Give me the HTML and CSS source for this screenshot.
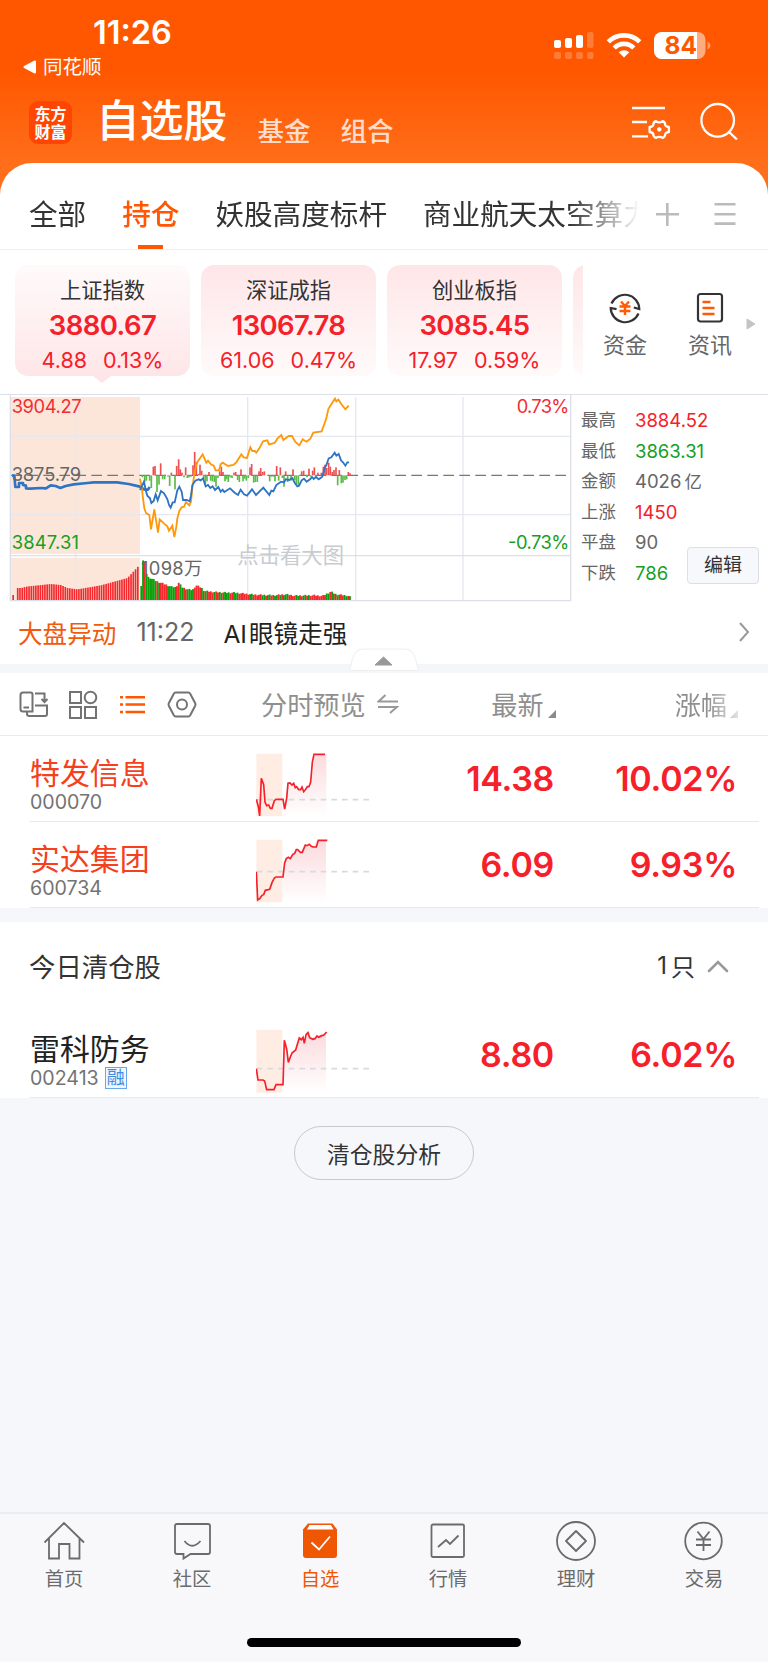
FILE: index.html
```html
<!DOCTYPE html>
<html lang="zh-CN">
<head>
<meta charset="utf-8">
<title>自选股</title>
<link rel="stylesheet" href="styles.css">
</head>
<body>
<div class="phone">
  <header class="top">
    <div class="status">
      <div class="status-left">
        <div class="time">11:26</div>
        <div class="back"><svg width="14" height="14" viewBox="0 0 14 14"><path d="M1.5 7 12 1.5v11z" fill="#fff" stroke="#fff" stroke-width="2" stroke-linejoin="round"/></svg><span>同花顺</span></div>
      </div>
      <svg class="status-icons" width="160" height="32" viewBox="550 30 160 32">
        <g fill="#fff"><rect x="553" y="40" width="7" height="8" rx="2"/><rect x="564" y="38" width="7" height="10" rx="2"/><rect x="575" y="35" width="7" height="13" rx="2"/></g>
        <g fill="#fff" opacity=".22"><rect x="586" y="32" width="6.5" height="16" rx="2"/><rect x="553" y="52" width="7" height="7" rx="2"/><rect x="564" y="52" width="7" height="7" rx="2"/><rect x="575" y="52" width="7" height="7" rx="2"/><rect x="586" y="52" width="6.500" height="7" rx="2"/></g>
        <g fill="none" stroke="#fff" stroke-width="4.600"><path d="M607.300 41.800a22.300 22.300 0 0 1 31.400 0"/><path d="M613.200 48a13.800 13.800 0 0 1 19.600 0"/></g>
        <path d="M623 57.500l-5.300-5.200a7.600 7.600 0 0 1 10.600 0z" fill="#fff"/>
        <rect x="653" y="32" width="51.500" height="27" rx="8" fill="#ffab80"/>
        <path d="M661 32h35v27h-35a8 8 0 0 1-8-8V40a8 8 0 0 1 8-8z" fill="#fff"/>
        <path d="M706.500 41.500q3 1.500 3 4t-3 4z" fill="#ff9a66"/>
        <text x="663.500" y="54" class="battery-text">84</text>
      </svg>
    </div>
    <div class="titlebar">
      <div class="logo"><span>东方</span><span>财富</span></div>
      <h1>自选股</h1>
      <span class="sub-title">基金</span>
      <span class="sub-title second">组合</span>
      <svg class="title-icons" width="112" height="40" viewBox="628 100 112 40" fill="none" stroke="#fff" stroke-width="2.300">
        <path d="M631 108h33M631 122h15M631 136.300h16"/>
        <path d="M655 121.200q3.300 2.200 6.600 0 2.400.5 2.700 3.900 .6 1.700 3.600 1.900v5q-3 .3-3.600 2-.3 3.300-2.700 3.800-3.300-2-6.600 0-2.500-.5-2.800-3.800-.6-1.700-3.600-2v-5q3-.2 3.600-1.900.3-3.400 2.800-3.900z" stroke-linejoin="round"/>
        <circle cx="658.300" cy="129.400" r="1.800" fill="#fff" stroke-width="1"/>
        <circle cx="716.700" cy="120.300" r="16.300"/><path d="M727.500 131.500l8.500 8"/>
      </svg>
    </div>
  </header>

  <main class="panel">
    <nav class="tabs">
      <div class="tab-list">
        <span>全部</span><span class="active">持仓</span><span>妖股高度标杆</span><span>商业航天太空算力</span>
      </div>
      <svg class="tab-tools" width="72" height="26" viewBox="665 201 72 26" fill="none" stroke="#bbb" stroke-width="2.600"><path d="M656 214.300h23M667.300 203v23" /><path d="M714.500 204.300h21M714.500 214.300h21M714.500 223.600h21"/></svg>
    </nav>

    <section class="indices">
      <div class="card-list">
        <article class="card current"><h2>上证指数</h2><strong>3880.67</strong><p><span>4.88</span><span>0.13%</span></p></article>
        <article class="card"><h2>深证成指</h2><strong>13067.78</strong><p><span>61.06</span><span>0.47%</span></p></article>
        <article class="card"><h2>创业板指</h2><strong>3085.45</strong><p><span>17.97</span><span>0.59%</span></p></article>
        <article class="card"></article>
      </div>
      <div class="quick">
        <svg width="34" height="34" viewBox="0 0 34 34" fill="none" stroke="#333" stroke-width="2.200"><path d="M3.500 12.500A14.500 14.500 0 0 1 31.300 18l-5.500-1.500M30.500 22.500A14.500 14.500 0 0 1 2.700 17l5.800 1.200"/><path d="M13 10.500l4 4.500 4-4.500M11.500 15.500h11M11.500 20h11M17 15v9" stroke="#ff5a05" stroke-width="2.400"/></svg>
        <span>资金</span>
      </div>
      <div class="quick">
        <svg width="34" height="34" viewBox="0 0 34 34" fill="none" stroke="#333" stroke-width="2.200"><rect x="5" y="3" width="24" height="27.500" rx="2.500"/><path d="M9.500 11h8M9.500 17h12M9.500 23h12" stroke="#ff5a05" stroke-width="2.600"/></svg>
        <span>资讯</span>
      </div>
      <svg class="more" width="10" height="12" viewBox="0 0 10 12"><path d="M1 1l8 5-8 5z" fill="#c4c4c4" stroke="#c4c4c4" stroke-linejoin="round"/></svg>
    </section>

    <section class="market">
      <svg class="chart" width="576" height="212" viewBox="0 24 1728 636">
        <path d="M33 36H420V507H33zM33 518H420V646H33z" fill="#fce6da"/>
        <g fill="none" stroke="#e6e8f0" stroke-width="4"><path d="M227 36V646M743 36V646M1067 36V646M1389 36V646M31 154H1712M31 389H1712"/><path d="M31 28V647H1712V28M31 512H1712" stroke="#dcdfe8"/></g>
        <path d="M34 271H1712" stroke="#777" stroke-width="4" stroke-dasharray="32 16"/>
        <g id="bars"></g>
        <path fill="none" stroke="#2f74c4" stroke-width="8" stroke-linejoin="round" d="M36 272h7l3 34h11v-12h12v6l9 2v8l14 1 30-2 16 1 14-9 15 2 14 6 16-6 24-5 42-4 18-2 70 0 35 5 34 8 12 8 12 1 5-8"/>
        <polyline fill="none" stroke="#ff980b" stroke-width="5.500" points="420,281 425,306 429,340 433,370 438,384 448,390 453,433 463,373 474,443 479,403 495,418 502,424 507,437 517,422 523,456 529,425 532,400 538,378 545,367 552,365 558,351 568,361 573,350 577,310 584,260 592,231 601,218 608,208 619,233 624,227 633,238 641,242 647,256 657,256 662,238 668,233 684,243 700,240 709,232 724,208 731,217 741,219 751,187 757,198 764,198 769,203 778,190 789,169 802,166 807,178 824,174 832,161 844,150 850,165 866,153 876,153 886,171 898,181 908,163 919,170 931,161 940,143 965,139 972,120 979,100 985,72 994,58 1005,41 1009,49 1015,44 1024,57 1036,73 1046,62"/>
        <polyline fill="none" stroke="#2f74c4" stroke-width="5.500" points="420,315 432,290 437,315 442,332 450,340 454,354 461,348 467,328 473,346 483,318 492,325 502,342 507,360 512,368 518,352 524,352 532,316 538,305 545,320 549,345 560,345 569,349 573,332 577,300 586,287 596,283 602,286 609,280 617,304 624,300 631,309 638,304 645,315 655,306 662,320 668,314 673,321 690,310 704,323 714,330 722,314 732,328 741,332 756,313 768,330 790,308 808,330 814,317 820,319 829,300 843,290 852,292 857,283 868,285 877,279 884,293 892,304 897,302 905,286 912,281 920,290 931,282 936,276 941,282 948,276 956,283 967,275 974,250 980,238 986,220 994,217 1004,203 1009,212 1016,207 1023,226 1029,232 1036,242 1042,232 1047,232"/>
        <g class="chart-label">
          <text x="35" y="84" fill="#f32c33" textLength="210">3904.27</text>
          <text x="35" y="288" fill="#666" textLength="208">3875.79</text>
          <text x="35" y="491" fill="#14a01e" textLength="202">3847.31</text>
          <text x="1708" y="84" fill="#f32c33" text-anchor="end" textLength="158">0.73%</text>
          <text x="1708" y="491" fill="#14a01e" text-anchor="end" textLength="184">-0.73%</text>
          <text x="423" y="569" fill="#666" textLength="184">1098万</text>
          <text x="712" y="534" class="watermark">点击看大图</text>
        </g>
      </svg>
      <dl class="stats">
        <div><dt>最高</dt><dd class="up">3884.52</dd></div>
        <div><dt>最低</dt><dd class="down">3863.31</dd></div>
        <div><dt>金额</dt><dd>4026<i>亿</i></dd></div>
        <div><dt>上涨</dt><dd class="up">1450</dd></div>
        <div><dt>平盘</dt><dd>90</dd></div>
        <div><dt>下跌</dt><dd class="down">786</dd></div>
      </dl>
      <button class="edit">编辑</button>
    </section>

    <section class="news">
      <span class="news-tag">大盘异动</span><span class="news-time">11:22</span><span class="news-text">AI<i>眼镜走强</i></span>
      <svg width="12" height="22" viewBox="0 0 12 22"><path d="M2 2l8 9-8 9" fill="none" stroke="#999" stroke-width="2"/></svg>
    </section>
    <div class="divider"><svg width="70" height="24" viewBox="0 0 70 24"><path d="M.5 22.500C3 18 2 1 14 1H56C68 1 67 18 69.500 22.500z" fill="#fff" stroke="#eceef2"/><path d="M26 17h17l-8.500-8z" fill="#999" stroke="#999" stroke-linejoin="round"/></svg></div>

    <section class="columns">
      <svg class="modes" width="180" height="32" viewBox="18 688 180 32" fill="none" stroke="#737373" stroke-width="2">
        <path d="M32.500 711.500H23q-2.500 0-2.500-2.500V695q0-2.500 2.500-2.500h7.500q2 0 2 2zM23.500 707.500h5.500M35 693.500h9.500v7M41.500 699l3 3 3-3M35 705.500h12v8.500q0 2-2 2H29.500q-2.500 0-2.500-2v-2"/>
        <rect x="70" y="692" width="11" height="11"/><circle cx="90.500" cy="697.500" r="5.800"/><rect x="70" y="707" width="11" height="11"/><rect x="85" y="707" width="11" height="11"/>
        <path d="M125.500 697.300H145M125.500 704.600H145M125.500 712H145M120 697.300h3M120 704.600h3M120 712h3" stroke="#ff5704" stroke-width="2.500"/>
        <path d="M175.500 692.500h13q1 0 1.700 1.200l5 9.500q.5 1.300 0 2.500l-5 9.500q-.7 1.200-1.700 1.200h-13q-1 0-1.700-1.200l-5-9.500q-.5-1.200 0-2.500l5-9.500q.7-1.200 1.700-1.200z"/><circle cx="182" cy="704.500" r="5"/>
      </svg>
      <span class="col-preview">分时预览<svg width="22" height="20" viewBox="0 0 22 20" fill="none" stroke="#999" stroke-width="2"><path d="M8.500 1l-7 6.500H21M1 13h19l-7 6"/></svg></span>
      <span class="col-price">最新<svg width="8" height="8"><path d="M8 0v8H0z" fill="#8a8a8a"/></svg></span>
      <span class="col-change">涨幅<svg width="8" height="8"><path d="M8 0v8H0z" fill="#8a8a8a"/></svg></span>
    </section>

    <section class="stocks">
      <article class="stock">
        <div class="name held"><b>特发信息</b><small>000070</small></div>
        <svg class="spark" width="115" height="66" viewBox="50 40 345 198">
          <path d="M51 42H129V230H51z" fill="#ffede4"/><path d="M129 185l7 20 6-30 5-44 12-1 6 9 12 9 8 0 5-7 5 14 12-14h6l6-30 6-60 5-8h31V230H129z" fill="url(#fade)"/>
          <path d="M52 180H390" stroke="#d8dae0" stroke-width="5" stroke-dasharray="17 15"/>
          <path d="M51 179l6 22 4 28 5-113 7 19 4 52 5 11 6-2 5 10h5l7-23 5-4h21l5 29 6-32 4-45 6-1 6 6 5-5 5 13 4-3 6 9h6l4-8 5 14 5-6 6-9 5 0 5-14 5-59 5-24h33" fill="none" stroke="#f6202a" stroke-width="5"/>
        </svg>
        <strong class="price">14.38</strong><strong class="change">10.02%</strong>
      </article>
      <article class="stock">
        <div class="name held"><b>实达集团</b><small>600734</small></div>
        <svg class="spark" width="115" height="66" viewBox="50 298 345 198">
          <path d="M51 300H129V488H51z" fill="#ffede4"/><path d="M129 412l7-46 13-11 20-24 14 9 12-25 30 4 8-17h27V488H129z" fill="url(#fade)"/>
          <path d="M52 396H390" stroke="#d8dae0" stroke-width="5" stroke-dasharray="17 15"/>
          <path d="M51 396l4 85 7-5 6-9 5-2 5-13 13-3 7-20 7-14 5-3h21l5-42 5-13 6-4 6 4 7-12 6-4 5-11 4 0 8 8h6l9-22 5 2 7-4 6 6 5 2h10l6-20h27" fill="none" stroke="#f6202a" stroke-width="5"/>
        </svg>
        <strong class="price">6.09</strong><strong class="change">9.93%</strong>
      </article>
      <div class="gap"></div>
      <div class="cleared"><span>今日清仓股</span><span class="count">1<i>只</i><svg width="22" height="14" viewBox="0 0 22 14"><path d="M2 12l9-9 9 9" fill="none" stroke="#999" stroke-width="2.600" stroke-linecap="round"/></svg></span></div>
      <article class="stock">
        <div class="name"><b>雷科防务</b><small>002413<em>融</em></small></div>
        <svg class="spark" width="115" height="66" viewBox="770 628 345 198">
          <path d="M771 630H849V819H771z" fill="#ffede4"/><path d="M852 795l3-133 12 66 12-34 11-3 10-35 16 5 10-25 10 18 44-15V819H852z" fill="url(#fade)"/>
          <path d="M772 747H1110" stroke="#d8dae0" stroke-width="5" stroke-dasharray="17 15"/>
          <path d="M771 747l5 34h15l5 3 6 26h22l6-15h21l4-133 7 26 5 40 6-16 5-12 6-5 5-4 6-20 5-16 6 5 5-7 4 18 5-26 6-6 5 15 9 5 7-2 6-8 5 4 9-5 6-1 9-10" fill="none" stroke="#f6202a" stroke-width="5"/>
        </svg>
        <strong class="price">8.80</strong><strong class="change">6.02%</strong>
      </article>
    </section>
  </main>

  <div class="rest"><button class="analysis">清仓股分析</button></div>

  <footer class="bottom">
    <nav class="menu">
      <a><svg width="42" height="42" viewBox="0 0 42 42"><path d="M1.500 22.500L21 3l20 19.500M6 18.500V38.500H16V24H26.500V38.500H36.500V18.500"/></svg>首页</a>
      <a><svg width="42" height="42" viewBox="0 0 42 42"><path d="M6 4h31q2 0 2 2v26q0 2-2 2H19.500l-7 4.500V34H6q-2 0-2-2V6q0-2 2-2zM13.500 21q7.500 9.500 16 0"/></svg>社区</a>
      <a class="on"><svg width="42" height="42" viewBox="0 0 42 42"><path d="M9 3.500H33.500L38 9.500V35q0 3-3 3H7q-3 0-3-3V9.500z" fill="#ef5705" stroke="none"/><path d="M10.500 5H32l2.500 4.500H8z" fill="#fff" stroke="none"/><path d="M12.500 22.500l7.500 7 11-13" stroke="#fff"/></svg>自选</a>
      <a><svg width="42" height="42" viewBox="0 0 42 42"><rect x="4.500" y="4.500" width="32.500" height="32.500" rx="1.500"/><path d="M11 27l8-7 4 4 8.500-8.500"/></svg>行情</a>
      <a><svg width="42" height="42" viewBox="0 0 42 42"><circle cx="21" cy="21" r="19"/><path d="M21 11l10 10-10 10-10-10z" stroke-linejoin="round"/></svg>理财</a>
      <a><svg width="42" height="42" viewBox="0 0 42 42"><circle cx="20.500" cy="21" r="18.300"/><path d="M14.500 11.500l6 7.500 6-7.500M13 19.500h15M13 25h15M20.500 19v12"/></svg>交易</a>
    </nav>
    <div class="home"></div>
  </footer>
</div>
<svg width="0" height="0" class="defs"><defs><linearGradient id="fade" x1="0" y1="0" x2="0" y2="1"><stop offset="0" stop-color="#fbdadd"/><stop offset="1" stop-color="#fff"/></linearGradient></defs></svg>
<script src="chart.js"></script>
</body>
</html>
```
FILE: styles.css
```css
* { box-sizing: border-box; }
body { margin: 0; font-family: Inter, "Noto Sans CJK SC", sans-serif; color: #333; }
h1, h2, p, dl, dd, dt { margin: 0; font-weight: 400; }
i, em { font-style: normal; }
button { font-family: inherit; padding: 0; }
svg { display: block; flex: none; }
.defs { position: absolute; }
.phone { width: 768px; height: 1662px; display: flex; flex-direction: column; overflow: hidden; background: #f6f7fb; }

.top { height: 203px; background: linear-gradient(#ff5700 70px, #ff6e1a 163px); flex: none; color: #fff; }
.status { height: 84px; display: flex; justify-content: space-between; padding: 13px 58px 0 23px; }
.time { font-size: 32.500px; font-weight: 600; line-height: 40px; padding-left: 70px; letter-spacing: 0; }
.back { display: flex; align-items: center; gap: 6px; font-size: 19.500px; line-height: 28px; }
.status-icons { margin: 17px -1px 0 0; }
.battery-text { font-size: 24.500px; font-weight: 700; fill: #ff5700; }
.titlebar { display: flex; align-items: flex-start; height: 79px; padding: 0 28px 0 29px; }
.logo { width: 43px; height: 43px; margin-top: 17px; border-radius: 9px; background: #ff4502; display: flex; flex-direction: column; align-items: center; justify-content: center; font-size: 16px; line-height: 18px; font-weight: 700; }
.titlebar h1 { font-size: 43.800px; line-height: 60px; font-weight: 500; margin: 8px 0 0 24px; }
.sub-title { font-size: 26.500px; line-height: 40px; font-weight: 500; color: #ffdccb; margin: 27px 0 0 30px; }
.title-icons { margin: 16px -1px 0 auto; }

.panel { margin-top: -40px; background: #fff; border-radius: 32px 32px 0 0; flex: none; }
.tabs { height: 87px; border-bottom: 1px solid #eee; display: flex; align-items: center; padding: 15px 31px 0 29px; }
.tab-list { display: flex; gap: 36px; width: 611px; height: 71px; align-items: center; overflow: hidden; white-space: nowrap; font-size: 28.600px; -webkit-mask-image: linear-gradient(90deg, #000 540px, transparent 611px); mask-image: linear-gradient(90deg, #000 540px, transparent 611px); }
.tab-list span { flex: none; height: 71px; line-height: 73px; }
.tab-list .active { color: #ff5704; font-weight: 500; background: linear-gradient(#ff5704, #ff5704) center bottom / 25px 4px no-repeat; }
.tab-tools { margin-left: auto; overflow: visible; }

.indices { height: 144px; display: flex; padding: 15px 0 0 15px; }
.card-list { width: 568px; height: 120px; display: flex; gap: 11px; overflow: hidden; }
.card { position: relative; width: 175px; height: 111px; flex: none; border-radius: 13px; background: linear-gradient(#fee6e8, #fffafa); text-align: center; color: #f6202a; }
.card.current { background: linear-gradient(#fffafa, #fee6e8); }
.card.current::after { content: ""; position: absolute; left: 78px; top: 111px; border: 9px solid transparent; border-top: 7px solid #fee6e8; border-bottom: 0; }
.card h2 { font-size: 21.300px; line-height: 30px; color: #333; padding-top: 10px; }
.card strong { display: block; font-size: 27.500px; line-height: 36px; font-weight: 600; margin-top: 2px; letter-spacing: -.6px; }
.card p { display: flex; justify-content: center; gap: 16px; font-size: 21.500px; line-height: 32px; letter-spacing: 0; padding-top: 1px; }
.quick { width: 84px; display: flex; flex-direction: column; align-items: center; font-size: 22px; line-height: 30px; color: #666; padding-top: 26px; gap: 5px; }
.quick + .quick { margin-left: 1px; }
.more { margin: 53px 0 0 -6px; }

.market { position: relative; height: 212px; display: flex; border-top: 1px solid #dcdfe8; }
.chart { margin-top: -2px; }
.chart-label { font-size: 55px; }
.watermark { font-size: 64px; fill: #c9cbd0; }
.stats { padding: 10px 0 0 5px; font-size: 18.500px; color: #666; }
.stats div { display: flex; gap: 19px; height: 30.500px; line-height: 30.500px; }
.stats dt { font-size: 17.400px; width: 35px; white-space: nowrap; }
.stats i { font-size: 17.400px; margin-left: 3px; }
.stats .up { color: #f6202a; }
.stats .down { color: #14a01e; }
.edit { position: absolute; left: 687px; top: 152px; width: 72px; height: 37px; border: 1px solid #dcdfe6; border-radius: 4px; background: #f7f8fb; color: #333; font-size: 19px; line-height: 33px; }

.news { height: 58px; display: flex; align-items: center; padding: 0 18px 7px 18px; font-size: 24.600px; }
.news-tag { color: #f15a0c; }
.news-time { margin-left: 20px; color: #666; font-size: 25px; width: 87px; letter-spacing: 0; }
.news-text { color: #222; }
.news-text i { margin-left: 2px; }
.news svg { margin-left: auto; }
.divider { height: 9px; background: #f5f6fa; }
.divider svg { margin: 0 auto; position: relative; top: -16px; }

.columns { height: 63px; border-bottom: 1px solid #eaeaec; display: flex; align-items: center; padding: 0 30px 0 18px; font-size: 26.200px; color: #8f8f8f; }
.columns span { display: flex; align-items: center; white-space: nowrap; }
.col-preview { margin-left: 63px; gap: 11px; }
.col-price { margin-left: auto; gap: 4px; }
.col-change { margin-left: 119px; gap: 3px; -webkit-mask-image: linear-gradient(90deg, #000 50%, rgba(0,0,0,.25)); mask-image: linear-gradient(90deg, #000 50%, rgba(0,0,0,.25)); }
.col-price svg, .col-change svg { margin-top: 20px; }

.stock { height: 86px; margin: 0 9px 0 30px; border-bottom: 1px solid #e8e9ec; display: flex; align-items: center; }
.name { width: 226px; padding-top: 9px; }
.name b { display: block; font-size: 29.900px; line-height: 38px; font-weight: 400; color: #222; }
.name.held b { color: #f5401b; }
.name small { display: flex; align-items: center; height: 20px; font-size: 19.600px; line-height: 20px; color: #737373; }
.name em { width: 22px; height: 22px; margin-left: 6px; border: 1px solid #6aa7ea; background: #eef6ff; color: #3f8de0; font-size: 18px; line-height: 19px; text-align: center; }
.spark { margin-top: 14px; }
.stock strong { font-size: 34px; font-weight: 600; color: #f6202a; text-align: right; letter-spacing: -.3px; }
.price { width: 183px; }
.change { width: 183px; }
.gap { height: 14px; background: #f6f7fb; }
.cleared { height: 90px; display: flex; justify-content: space-between; align-items: center; padding: 0 39px 3px 29px; font-size: 26.400px; }
.count { display: flex; align-items: center; font-size: 24px; }
.count i { margin: 0 12px 0 4px; }

.rest { flex: 1; display: flex; justify-content: center; align-items: flex-start; padding-top: 28px; }
.analysis { width: 180px; height: 54px; border: 1px solid #c8c9cc; border-radius: 27px; background: transparent; color: #333; font-size: 22.800px; }

.bottom { height: 150px; border-top: 2px solid #ebecef; background: #f8f8fb; flex: none; }
.menu { display: grid; grid-template-columns: repeat(6, 1fr); }
.menu a { display: flex; flex-direction: column; align-items: center; padding-top: 6px; gap: 3px; font-size: 19.300px; line-height: 28px; color: #6b6b6b; }
.menu svg { fill: none; stroke: #6b6b6b; stroke-width: 1.800; }
.menu .on { color: #ef5705; }
.home { width: 274px; height: 9px; border-radius: 5px; background: #000; margin: 45px auto 0; }
```
FILE: chart.js
```js
const RED = '#f5292d', GREEN = '#0aa00a';
const layer = document.getElementById('bars');

function bar(x, y, width, height, color) {
  const r = document.createElementNS('http://www.w3.org/2000/svg', 'rect');
  r.setAttribute('x', x);
  r.setAttribute('y', y);
  r.setAttribute('width', width);
  r.setAttribute('height', height);
  r.setAttribute('fill', color);
  layer.appendChild(r);
}

function at(points, x) {
  for (let i = 1; i < points.length; i++) {
    const [x0, y0] = points[i - 1], [x1, y1] = points[i];
    if (x <= x1) return y0 + (y1 - y0) * (x - x0) / (x1 - x0);
  }
  return points[points.length - 1][1];
}

// auction volume
const pre = [[37, 15], [44, 15], [50, 36], [62, 36], [75, 40], [150, 48], [180, 45], [200, 36], [230, 32], [300, 44], [380, 66], [415, 104]];
for (let x = 37; x < 417; x += 6.8) {
  if (x > 43 && x < 48) continue;
  const h = at(pre, x);
  bar(x, 645 - h, 5, h, RED);
}

// session volume
const vol = [[421, 42], [427, 128], [432, 112], [438, 72], [450, 65], [470, 55], [490, 48], [510, 40], [525, 38], [533, 52], [545, 37], [560, 32], [575, 30], [585, 44], [600, 38], [610, 27], [640, 24], [680, 22], [700, 22], [760, 16], [820, 14], [855, 17], [880, 13], [940, 14], [965, 12], [990, 25], [1005, 17], [1040, 13], [1050, 8]];
const tones = 'GGRGGGGGGRGRRRRGGGGGRRGGRRGGGGRRRRGGRGRRRGRRGGRGGGRRGGGRRRRRRGGRRRRRGGRGGRRGGRGRGGGRRRRGGRRGGRGRRRRRRRRRGGRGRGRGRR';
for (let i = 0, x = 421; x < 1050; i++, x += 5.35) {
  const h = at(vol, x) + (i > 4 ? (i * 7 % 5) - 2 : 0);
  bar(x, 645 - h, 5.6, h, tones[i % tones.length] === 'R' ? RED : GREEN);
}

// momentum columns around the previous close
const flow = [[427, -6], [434, -20], [439, -16], [449, -16], [454, -38], [460, 26], [465, 28], [471, -50], [477, -28], [482, 36], [488, -12], [494, -12], [504, -4], [509, -32], [514, 8], [525, -42], [530, 28], [536, 48], [541, 18], [546, 8], [552, -6], [557, 24], [562, -8], [567, -6], [573, -4], [579, 30], [584, 70], [589, 40], [595, 4], [600, 32], [605, 14], [611, -10], [616, -26], [621, -18], [627, 10], [632, -16], [637, -18], [643, -20], [648, -34], [654, -8], [659, 12], [664, 26], [669, 10], [675, -18], [680, -12], [685, -20], [691, -6], [696, -8], [702, 8], [707, 10], [713, -14], [718, -20], [723, 18], [729, -18], [734, -10], [739, -16], [745, -8], [750, 24], [755, 34], [761, -22], [766, -20], [772, -20], [777, 12], [782, 22], [788, 10], [793, 12], [809, -18], [814, -4], [820, -4], [825, -18], [830, 28], [836, -16], [841, 24], [847, -8], [852, -34], [857, 12], [863, -20], [873, -16], [879, 18], [884, -14], [889, -26], [895, -28], [905, 12], [911, 14], [921, -6], [927, 20], [932, -4], [938, 14], [943, 24], [949, -6], [954, 8], [964, 8], [970, 26], [975, 32], [980, 22], [986, 38], [991, 26], [997, 10], [1002, 16], [1008, 24], [1013, -30], [1018, 16], [1024, -24], [1029, -22], [1035, -14], [1040, -12], [1045, 10], [1050, 6]];
for (const [x, v] of flow) {
  bar(x - 2.5, v > 0 ? 271 - v : 271, 5, Math.abs(v), v > 0 ? '#ee5052' : '#5cba46');
}
```
